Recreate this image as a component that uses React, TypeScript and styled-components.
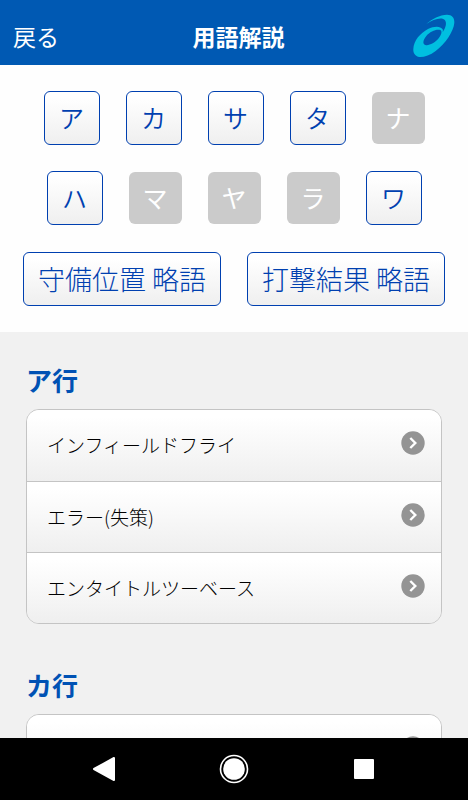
import React from "react";
import styled, { createGlobalStyle, css } from "styled-components";

const GlobalStyle = createGlobalStyle`
  *, *::before, *::after { box-sizing: border-box; }
  body {
    margin: 0;
    background: #f1f1f1;
    color: #222;
    font-family: "Noto Sans CJK JP", "Noto Sans", sans-serif;
  }
  button { font: inherit; cursor: pointer; }
`;

const blue = "#0040b0";

const Screen = styled.div`
  display: flex;
  flex-direction: column;
  height: 100vh;
`;

const Header = styled.header`
  display: grid;
  grid-template-columns: auto 1fr auto;
  align-items: center;
  flex: none;
  padding: 14px 13px 7px;
  background: #0059b3;
  color: #fff;
`;

const BackButton = styled.button`
  padding: 0 5px 0 0;
  border: 0;
  background: none;
  color: inherit;
  font-size: 23px;
  line-height: 32px;
`;

const Title = styled.h1`
  margin: 0;
  font-size: 23px;
  font-weight: 700;
  line-height: 32px;
  text-align: center;
`;

const Logo = styled.svg`
  width: 42px;
  height: 44px;
`;

const Content = styled.main`
  flex: 1;
  min-height: 0;
  overflow-y: auto;
  scrollbar-width: none;
`;

const IndexPanel = styled.nav`
  display: flex;
  flex-direction: column;
  gap: 27px;
  padding: 26px 0;
  background: #fefefe;
`;

const LetterRows = styled.div`
  display: flex;
  flex-direction: column;
  gap: 26px;
`;

const ButtonRow = styled.div`
  display: flex;
  justify-content: center;
  align-items: center;
  gap: 26px;
`;

const indexButton = css`
  height: 54px;
  padding: 0;
  border: 1px solid ${blue};
  border-radius: 6px;
  background: linear-gradient(#fff 10%, #efefef);
  color: ${blue};
`;

const LetterButton = styled.button`
  ${indexButton}
  width: 56px;
  font-size: 25px;
  font-weight: 350;
  line-height: 50px;
  padding-bottom: 2px;

  &:disabled {
    width: 53px;
    height: 52px;
    border: 0;
    background: #cbcbcb;
    color: #fff;
    font-weight: 400;
    cursor: default;
  }
`;

const WordButton = styled.button`
  ${indexButton}
  padding: 0 14px;
  font-size: 27px;
  font-weight: 300;
  line-height: 52px;
`;

const Section = styled.section`
  padding: 28px 26px 13px;
`;

const SectionTitle = styled.h2`
  margin: 0 0 9px;
  color: #0052b4;
  font-size: 26px;
  font-weight: 700;
  line-height: 40px;
`;

const TermList = styled.ul`
  margin: 0;
  padding: 0;
  border: 1px solid #c4c4c4;
  border-radius: 13px;
  overflow: hidden;
  list-style: none;
`;

const TermItem = styled.li`
  & + & { border-top: 1px solid #c4c4c4; }
`;

const TermButton = styled.button`
  display: flex;
  justify-content: space-between;
  align-items: flex-start;
  width: 100%;
  height: 71px;
  padding: 21px 16px 0 20px;
  border: 0;
  background: linear-gradient(#fff 10%, #efefef);
  color: #000;
  font-size: 19px;
  font-weight: 300;
  line-height: 28px;
  text-align: left;

  ${TermItem} + ${TermItem} & { height: 70px; }
`;

const Arrow = styled.svg`
  flex: none;
  width: 24px;
  height: 24px;
  margin-left: auto;
`;

const SystemBar = styled.footer`
  display: grid;
  grid-template-columns: repeat(3, 1fr);
  flex: none;
  height: 62px;
  padding: 0 39px;
  background: #000;
`;

const SystemButton = styled.button`
  display: grid;
  place-items: center;
  padding: 0;
  border: 0;
  background: none;
  color: #fff;
`;

const letterRows = [
  [["ア", true], ["カ", true], ["サ", true], ["タ", true], ["ナ", false]],
  [["ハ", true], ["マ", false], ["ヤ", false], ["ラ", false], ["ワ", true]],
] as [string, boolean][][];

const wordButtons = ["守備位置 略語", "打撃結果 略語"];

const sections = [
  { title: "ア行", terms: ["インフィールドフライ", "エラー(失策)", "エンタイトルツーベース"] },
  { title: "カ行", terms: [""] },
];

const ArrowIcon = () => (
  <Arrow viewBox="0 0 24 24" aria-hidden="true">
    <circle cx="12" cy="12" r="11.7" fill="#949494" />
    <path d="M9.3 7l5 5-5 5" fill="none" stroke="#fff" strokeWidth="2.4" />
  </Arrow>
);

export default function App() {
  return (
    <>
      <GlobalStyle />
      <Screen>
        <Header>
          <BackButton type="button">戻る</BackButton>
          <Title>用語解説</Title>
          <Logo viewBox="41 43 126 130" role="img" aria-label="ロゴ">
            <path
              fill="#00bfe0"
              fillRule="evenodd"
              d="M81 72C97 57 122 44 143 44C158 44 166 53 165 68C163 94 138 131 109 153C92 166 73 172 60 171C48 169 41 160 42 147C43 122 63 99 86 87C104 78 123 77 130 88C131 90 131 93 130 97C139 84 143 70 137 61C129 50 102 57 81 72ZM124 91C113 86 93 94 81 108C71 120 69 132 78 135C88 138 107 129 118 115C126 105 129 95 124 91Z"
            />
          </Logo>
        </Header>
        <Content>
          <IndexPanel aria-label="索引">
            <LetterRows>
              {letterRows.map((row, i) => (
                <ButtonRow key={i}>
                  {row.map(([letter, enabled]) => (
                    <LetterButton key={letter} type="button" disabled={!enabled}>
                      {letter}
                    </LetterButton>
                  ))}
                </ButtonRow>
              ))}
            </LetterRows>
            <ButtonRow>
              {wordButtons.map((label) => (
                <WordButton key={label} type="button">{label}</WordButton>
              ))}
            </ButtonRow>
          </IndexPanel>
          {sections.map(({ title, terms }) => (
            <Section key={title}>
              <SectionTitle>{title}</SectionTitle>
              <TermList>
                {terms.map((term) => (
                  <TermItem key={term}>
                    <TermButton type="button" aria-label={term || title}>
                      {term}
                      <ArrowIcon />
                    </TermButton>
                  </TermItem>
                ))}
              </TermList>
            </Section>
          ))}
        </Content>
        <SystemBar>
          <SystemButton type="button" aria-label="戻る">
            <svg width="24" height="26" viewBox="0 0 24 26" aria-hidden="true">
              <path d="M2 13L22 2V24Z" fill="currentColor" stroke="currentColor" strokeWidth="2" strokeLinejoin="round" />
            </svg>
          </SystemButton>
          <SystemButton type="button" aria-label="ホーム">
            <svg width="30" height="30" viewBox="0 0 30 30" aria-hidden="true">
              <circle cx="15" cy="15" r="13.5" fill="none" stroke="currentColor" strokeWidth="1.6" />
              <circle cx="15" cy="15" r="10.8" fill="currentColor" />
            </svg>
          </SystemButton>
          <SystemButton type="button" aria-label="アプリ履歴">
            <svg width="20" height="20" viewBox="0 0 20 20" aria-hidden="true">
              <rect width="20" height="20" rx="1" fill="currentColor" />
            </svg>
          </SystemButton>
        </SystemBar>
      </Screen>
    </>
  );
}
